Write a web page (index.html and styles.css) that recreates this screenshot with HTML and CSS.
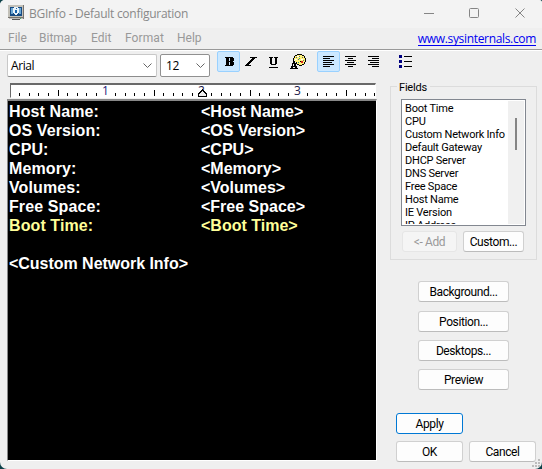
FILE: index.html
```
<!DOCTYPE html>
<html lang="en">
<head>
<meta charset="utf-8">
<title>BGInfo - Default configuration</title>
<link rel="stylesheet" href="styles.css">
</head>
<body>
<div class="window">
  <header class="titlebar">
    <svg class="app-icon" width="16" height="16" shape-rendering="crispEdges">
      <path fill="#c2c0b8" d="M0 0h16v13H0z"/><path fill="#77736e" d="M15 0h1v14h-1zM0 12h16v1H0z"/>
      <path fill="#174b83" d="M2 2h12v9H2z"/><path fill="#6ba7d5" d="M3 3h2v6H3zM11 3h2v6h-2z"/>
      <path fill="#e9f4fc" d="M6 2h4v1h1v5h-1v1H9v1H7V9H6V8H5V3h1z"/><path fill="#1762ac" d="M8 3h1v1H8zM7 5h2v3H7z"/>
      <path fill="#555" d="M4 14h8v1H4z"/><path fill="#bbb" d="M1 13h14v1H1z"/><path fill="#43b06a" d="M12 13h1v1h-1z"/>
    </svg>
    <h1 class="title">BGInfo - Default configuration</h1>
    <svg class="controls" width="102" height="12" fill="none" stroke="#858585">
      <path d="M0 6.500h10M91.500 1.500l9 9M100.500 1.500l-9 9"/><rect x="45.500" y="1.500" width="9" height="9" rx="1"/>
    </svg>
  </header>
  <nav class="menu">
    <span class="m-file">File</span><span class="m-bitmap">Bitmap</span><span class="m-edit">Edit</span><span class="m-format">Format</span><span class="m-help">Help</span>
    <a class="link">www.sysinternals.com</a>
  </nav>
  <div class="toolbar">
    <div class="select font">Arial<svg width="9" height="6"><path d="M.5 .5l4 4 4-4"/></svg></div>
    <div class="select size">12<svg width="9" height="6"><path d="M.5 .5l4 4 4-4"/></svg></div>
    <div class="tool active t-bold"><svg width="10" height="9" shape-rendering="crispEdges"><path fill-rule="evenodd" d="M0 0h8v1h1v3H8v1h1v3H8v1H0V8h1V1H0zM4 1h1v3H4zM4 5h1v3H4z"/></svg></div>
    <div class="tool t-italic"><svg width="12" height="9" shape-rendering="crispEdges"><path d="M5 0h7v1h-2v1H9v1H8v1H7v1H6v1H5v1H4v1h2v1H0V8h1V7h1V6h1V5h1V4h1V3h1V2h1V1H5z"/></svg></div>
    <div class="tool t-under"><svg width="9" height="11" shape-rendering="crispEdges"><path d="M0 0h4v1H3v6h3V1H5V0h4v1H8v6H7v1H2V7H1V1H0zM0 10h9v1H0z"/></svg></div>
    <div class="tool t-color"><svg width="16" height="15" shape-rendering="crispEdges">
      <path fill="#fff27a" d="M6 1h6v1h2v2h1v4h-1v2h-2v1H9v-1H7V8H5V6H4V4h1V2h1z"/>
      <path d="M7 0h5v1H7zM5 1h2v1H5zM12 1h2v1h-2zM4 2h1v2H4zM14 2h1v2h-1zM3 4h1v3H3zM15 4h1v4h-1zM14 8h1v2h-1zM12 10h2v1h-2zM9 11h3v1H9zM7 10h2v1H7zM6 8h1v2H6zM10 7h1v1h-1z"/>
      <path fill="#fff" d="M7 2h2v1H7zM5 5h2v1H5zM11 5h2v1h-2z"/><path fill="#666" d="M6 3h1v1H6zM9 2h1v1H9zM12 3h1v1h-1zM8 5h1v1H8zM13 6h1v1h-1z"/><path fill="#d22" d="M11 7h2v2h-2z"/><path fill="#159999" d="M9 4h1v1H9zM8 8h1v1H8z"/>
      <path fill-rule="evenodd" d="M3 7h2v2h1v3h1v2h1v1H4v-1h1v-1H3v1h1v1H0v-1h1v-2h1V9h1zM3 10h1v2H3z"/>
    </svg></div>
    <div class="tool active t-left"><svg width="12" height="11" shape-rendering="crispEdges"><path d="M0 0h11v1H0zM0 2h7v1H0zM0 4h11v1H0zM0 6h9v1H0zM0 8h11v1H0zM0 10h7v1H0z"/></svg></div>
    <div class="tool t-center"><svg width="11" height="11" shape-rendering="crispEdges"><path d="M0 0h11v1H0zM3 2h5v1H3zM0 4h11v1H0zM2 6h7v1H2zM0 8h11v1H0zM3 10h5v1H3z"/></svg></div>
    <div class="tool t-right"><svg width="11" height="11" shape-rendering="crispEdges"><path d="M0 0h11v1H0zM4 2h7v1H4zM0 4h11v1H0zM2 6h9v1H2zM0 8h11v1H0zM4 10h7v1H4z"/></svg></div>
    <div class="tool t-list"><svg width="13" height="13" shape-rendering="crispEdges"><path fill="#000080" d="M0 0h3v3H0zM0 5h3v3H0zM0 10h3v3H0z"/><path d="M5 1h8v1H5zM5 6h8v1H5zM5 11h8v1H5z"/></svg></div>
  </div>
  <main class="content">
    <section class="left">
      <div class="ruler">
        <svg width="364" height="12" shape-rendering="crispEdges">
          <g id="ticks"></g>
          <text class="n1" x="91" y="10">1</text><text x="187" y="10">2</text><text x="283" y="10">3</text>
          <path fill="#000" d="M191 4h1v1h1v1h1v1h1v1h1v4h-9V8h1V7h1V6h1V5h1z"/><path fill="#eee" d="M191 6h1v1h1v1h1v1h1v2h-7V9h1V8h1V7h1z"/>
        </svg>
      </div>
      <div class="editor">
        <div class="row"><span>Host Name:</span><span>&lt;Host Name&gt;</span></div>
        <div class="row"><span>OS Version:</span><span>&lt;OS Version&gt;</span></div>
        <div class="row"><span>CPU:</span><span>&lt;CPU&gt;</span></div>
        <div class="row"><span>Memory:</span><span>&lt;Memory&gt;</span></div>
        <div class="row"><span>Volumes:</span><span>&lt;Volumes&gt;</span></div>
        <div class="row"><span>Free Space:</span><span>&lt;Free Space&gt;</span></div>
        <div class="row yellow"><span>Boot Time:</span><span>&lt;Boot Time&gt;</span></div>
        <div class="row last">&lt;Custom Network Info&gt;</div>
      </div>
    </section>
    <aside class="side">
      <fieldset class="fields">
        <legend>Fields</legend>
        <div class="listbox">
          <ul><li>Boot Time</li><li>CPU</li><li>Custom Network Info</li><li>Default Gateway</li><li>DHCP Server</li><li>DNS Server</li><li>Free Space</li><li>Host Name</li><li>IE Version</li><li>IP Address</li></ul>
          <div class="scroll"><div class="thumb"></div></div>
        </div>
        <div class="pair"><button class="add" disabled>&lt;- Add</button><button class="custom">Custom...</button></div>
      </fieldset>
      <div class="actions">
        <button class="b-bg">Background...</button><button class="b-pos">Position...</button><button>Desktops...</button><button>Preview</button>
      </div>
      <div class="bottom"><button class="apply">Apply</button><button>OK</button><button>Cancel</button></div>
    </aside>
  </main>
  <svg class="grip" width="8" height="8" shape-rendering="crispEdges"><path fill="#bcbcbc" d="M6 0h2v2H6zM3 3h2v2H3zM6 3h2v2H6zM0 6h2v2H0zM3 6h2v2H3zM6 6h2v2H6z"/></svg>
</div>
<script src="ruler.js"></script>
</body>
</html>
```
FILE: styles.css
```
* { box-sizing: border-box; }
body { margin: 0; background: #0b4048; overflow: hidden; }
.window { position: relative; width: 542px; height: 469px; background: #efefef; border-radius: 5px 3px 7px 7px; overflow: hidden; font: 11px/13px Roboto, sans-serif; color: #000; }
.titlebar { height: 28px; background: #f3f3f3; display: flex; padding-left: 8px; }
.app-icon { margin-top: 5px; }
.title { margin: 5px 0 0 5px; font: 12px/17px "Open Sans", sans-serif; letter-spacing: -.27px; color: #898989; width: 395px; white-space: nowrap; }
.controls { margin-top: 7px; flex: none; }
.menu { height: 21px; display: flex; padding: 3px 6px 0 8px; font-size: 12px; line-height: 15px; color: #999; white-space: nowrap; }
.menu span { flex: none; }
.m-file { width: 31px; }
.m-bitmap { width: 52px; }
.m-edit { width: 34px; }
.m-format { width: 52px; letter-spacing: .1px; }
.m-help { width: 30px; }
.link { margin-left: auto; margin-top: 1px; height: 14px; font-family: "Open Sans", sans-serif; line-height: 14px; color: #0000f0; border-bottom: 1px solid #0000f0; letter-spacing: -.33px; }
.toolbar { height: 33px; border-top: 1px solid #999; box-shadow: inset 0 1px #fff; display: flex; padding: 1px 0 0 7px; }
.select { height: 23px; margin-top: 3px; border: 1px solid #c8c8c8; border-bottom-color: #8c8c8c; border-radius: 2px; background: #fff; display: flex; justify-content: space-between; align-items: center; padding: 0 4px 0 3px; font: 12px/17px "Open Sans", sans-serif; letter-spacing: -.4px; }
.select svg { fill: none; stroke: #666; }
.font { width: 150px; }
.size { width: 50px; margin-left: 3px; padding-left: 5px; border-color: #909090; }
.tool { width: 23px; height: 21px; flex: none; display: flex; align-items: center; justify-content: center; border: 1px solid transparent; border-radius: 2px; }
.active { background: #cce8ff; border-color: #99d1ff; }
.t-bold { margin-left: 7px; padding-left: 2px; }
.t-italic { margin-left: -1px; }
.t-under { padding-top: 2px; }
.t-color { padding-left: 2px; }
.t-left { margin-left: 9px; padding-left: 1px; }
.t-center { margin-left: -1px; }
.t-list { margin-left: 9px; }
.content { display: flex; height: 387px; }
.left { width: 370px; margin-left: 7px; padding-top: 1px; }
.ruler { margin-left: 3px; width: 366px; height: 15px; border: 1px solid #fff; border-top: 2px solid #696969; border-left-color: #696969; background: #fff; }
.ruler svg { display: block; overflow: visible; }
.ruler text { font: 12px/12px "Open Sans", sans-serif; fill: #20204a; }
.ruler .n1 { fill: #24187c; }
.editor { margin-top: 1px; height: 362px; width: 370px; background: #000; border: 1px solid #fff; border-top: 2px solid #888; border-left: 1px solid #888; color: #fff; font: bold 16px/19px "Liberation Sans", sans-serif; padding: 1px 0 0 1px; white-space: nowrap; }
.row { display: flex; height: 19px; }
.row span:first-child { width: 192px; letter-spacing: .1px; }
.yellow { color: #ffff99; }
.last { margin-top: 19px; letter-spacing: -.03px; }
.side { width: 165px; padding: 5px 5px 0 13px; }
.fields { margin: 0; height: 180px; width: 147px; border: 1px solid #dcdcdc; padding: 7px 10px 0; min-width: 0; margin-top: -7px; }
.fields legend { margin-left: -4px; padding: 1px 3px 0 2px; height: 13px; letter-spacing: -.2px; }
.listbox { width: 125px; height: 127px; background: #fff; border: 1px solid #828790; display: flex; overflow: hidden; padding: 1px; margin-top: -1px; }
.listbox ul { list-style: none; margin: 0; padding: 1px 0 0 2px; width: 105px; height: 123px; overflow: hidden; white-space: nowrap; flex: none; letter-spacing: -.22px; }
.listbox li { height: 13px; }
.scroll { width: 16px; background: #f0f0f0; padding: 17px 0 0 7px; }
.thumb { width: 2px; height: 32px; background: #858585; }
.pair { display: flex; margin: 5px 0 0 1px; gap: 6px; }
button { font: 12px/17px Roboto, sans-serif; letter-spacing: -.5px; color: #000; height: 21px; padding: 1px 0 0; background: #fdfdfd; border: 1px solid #d0d0d0; border-bottom-color: #bcbcbc; border-radius: 3px; white-space: nowrap; letter-spacing: -.4px; }
.add { width: 55px; color: #999; background: #f5f5f5; border-color: #e6e6e6; }
.custom { width: 61px; }
.actions { display: flex; flex-direction: column; gap: 8px; padding: 21px 0 0 28px; }
.actions button { width: 91px; }
.b-bg { margin-bottom: 1px; }
.bottom { display: grid; grid-template-columns: 67px 67px; gap: 7px 6px; padding: 23px 0 0 6px; }
.apply { grid-column: 1 / 3; width: 67px; border-color: #0078d4; }
.grip { position: absolute; right: 2px; bottom: 2px; }
```
FILE: ruler.js
```
const ticks = document.getElementById('ticks');
for (let i = 1; i < 39; i++) {
  // Tenths of an inch, with whole inches carrying a number instead.
  if (i % 10 === 0) continue;
  const tall = i % 10 === 5;
  const tick = document.createElementNS('http://www.w3.org/2000/svg', 'rect');
  tick.setAttribute('x', Math.round(i * 9.6 - 1.5));
  tick.setAttribute('y', tall ? 5 : 8);
  tick.setAttribute('width', 1);
  tick.setAttribute('height', tall ? 6 : 3);
  ticks.appendChild(tick);
}
```
